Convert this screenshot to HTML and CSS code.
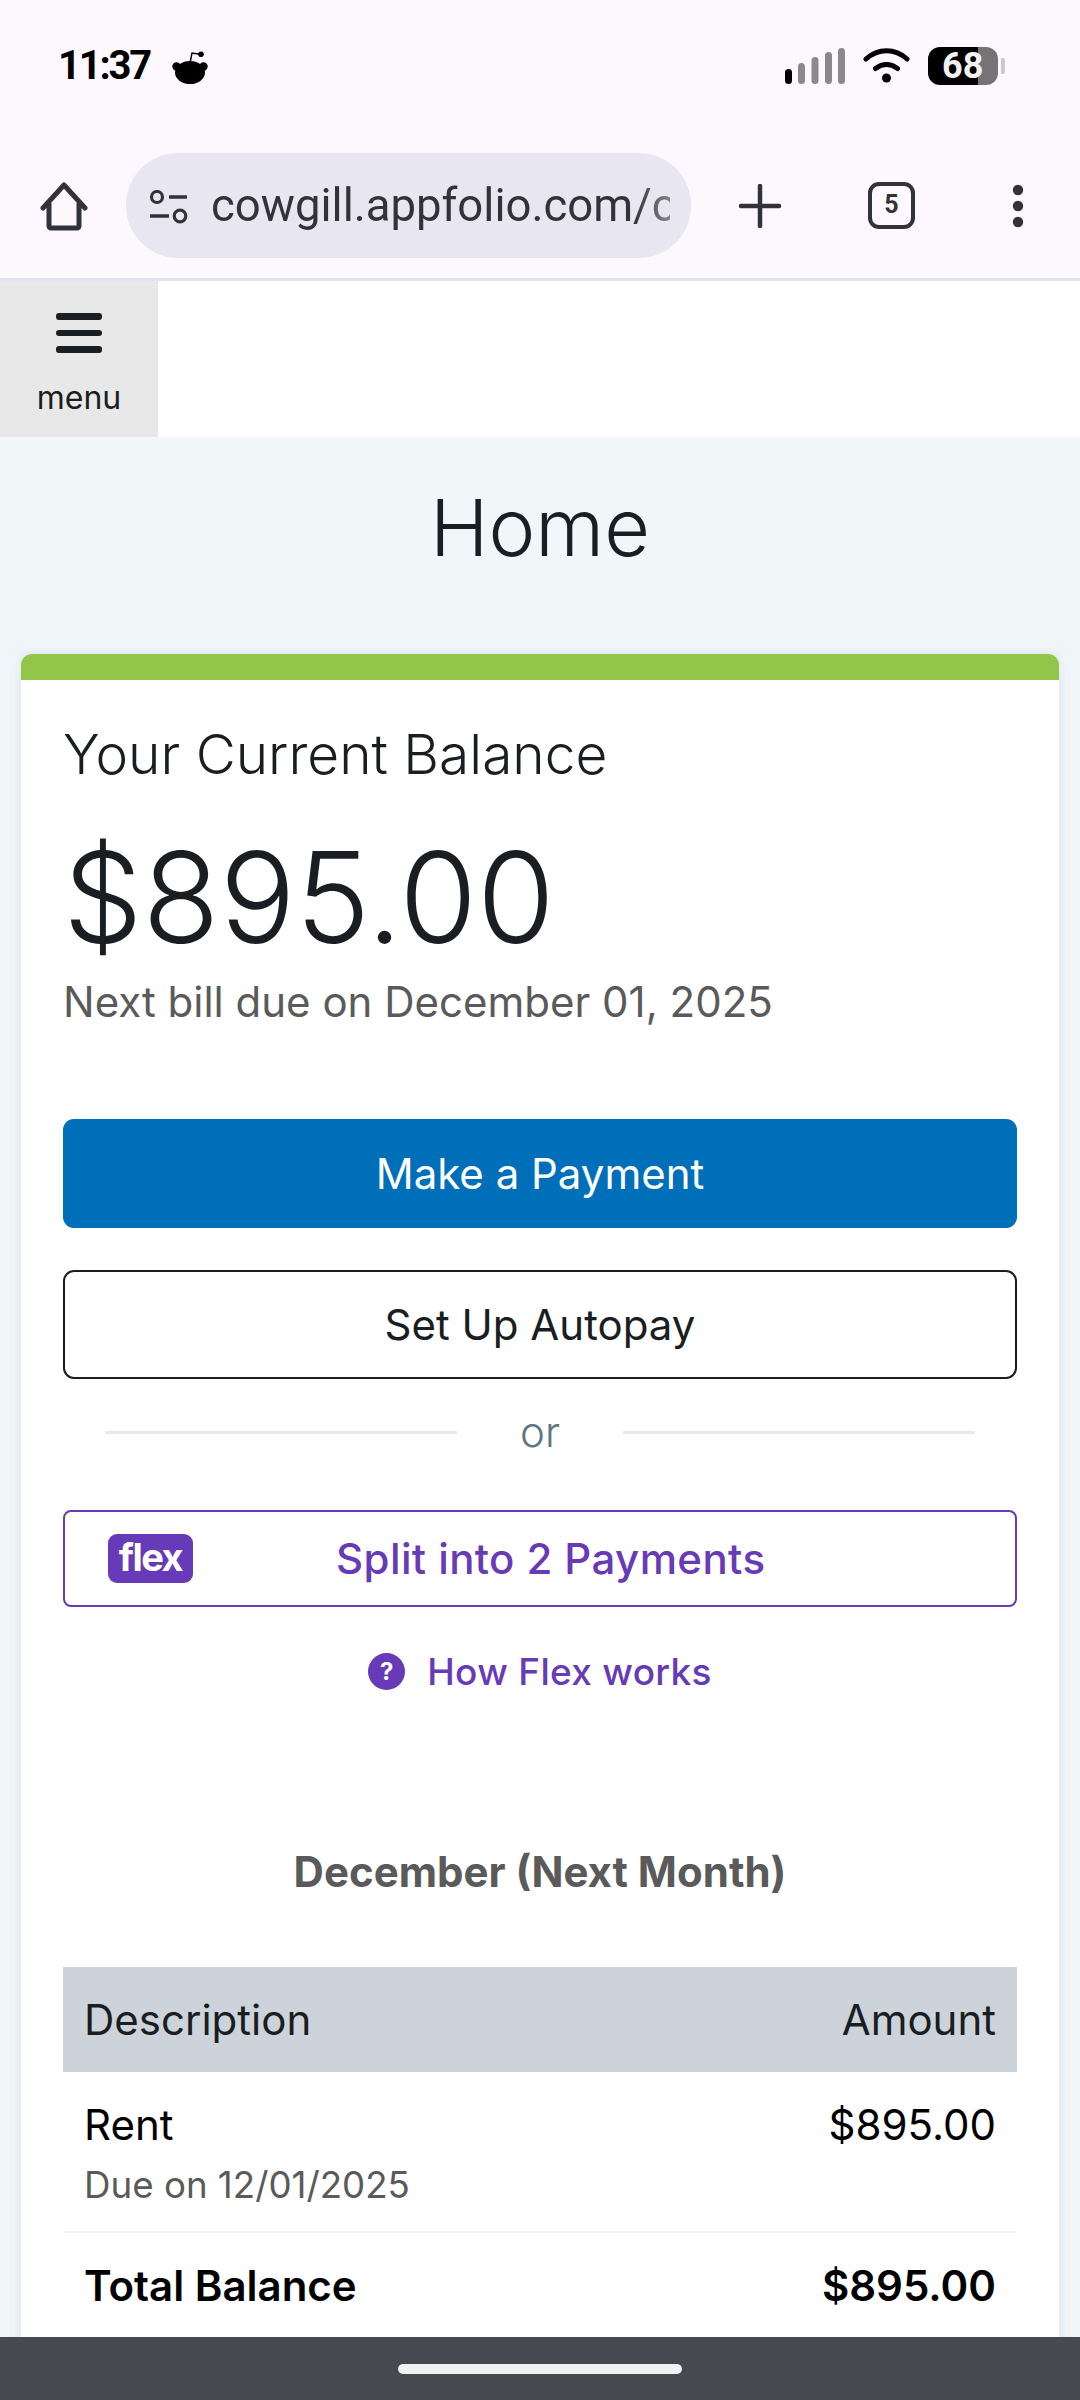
FILE: index.html
```html
<!DOCTYPE html>
<html lang="en">
<head>
<meta charset="utf-8">
<title>Home</title>
<link rel="stylesheet" href="styles.css">
</head>
<body>
<div class="screen">
  <header class="chrome">
    <div class="status">
      <div class="status-left">
        <span class="time">11:37</span>
        <svg class="reddit" viewBox="0 0 36 33" width="36" height="33"><ellipse cx="18" cy="21.500" rx="15" ry="11.500" fill="#000"/><circle cx="4.500" cy="15.500" r="4.200" fill="#000"/><circle cx="31.500" cy="15.500" r="4.200" fill="#000"/><path d="M18 12l2-10 8 1.200" fill="none" stroke="#000" stroke-width="1.500"/><circle cx="29" cy="3.200" r="2.800" fill="#000"/></svg>
      </div>
      <div class="status-right">
        <svg class="signal" viewBox="0 0 60 36" width="60" height="36"><rect x="0" y="21" width="7" height="15" rx="3.500" fill="#000"/><rect x="13" y="15" width="7" height="21" rx="3.500" fill="#8b898c"/><rect x="26.500" y="9" width="7" height="27" rx="3.500" fill="#8b898c"/><rect x="40" y="4" width="7" height="32" rx="3.500" fill="#8b898c"/><rect x="53" y="0" width="7" height="36" rx="3.500" fill="#8b898c"/></svg>
        <svg class="wifi" viewBox="0 0 47 36" width="47" height="36"><path d="M3 12C15 1 32 1 44 12M12.500 21.500c7-5 15-5 22 0" fill="none" stroke="#000" stroke-width="5" stroke-linecap="round"/><circle cx="23.500" cy="31" r="4.500" fill="#000"/></svg>
        <div class="battery"><div class="battery-body"><span class="battery-num">68</span></div><div class="battery-tip"></div></div>
      </div>
    </div>
    <div class="toolbar">
      <svg class="home-icon" viewBox="0 0 48 50" width="48" height="50"><path d="M3 26 24 3l21 23M9 22v22a2 2 0 0 0 2 2h26a2 2 0 0 0 2-2V22" fill="none" stroke="#32323a" stroke-width="5" stroke-linecap="round" stroke-linejoin="round"/></svg>
      <div class="urlbar">
        <svg class="tune" viewBox="0 0 39 34" width="39" height="34"><circle cx="8" cy="7" r="5.500" fill="none" stroke="#32323a" stroke-width="3.200"/><path d="M20 7h18M1 26h19" stroke="#32323a" stroke-width="3.400"/><circle cx="31" cy="26" r="5.800" fill="none" stroke="#32323a" stroke-width="3.200"/></svg>
        <span class="url">cowgill.appfolio.com/c</span>
      </div>
      <svg class="plus" viewBox="0 0 42 44" width="42" height="44"><path d="M21 2v40M2 22h38" stroke="#32323a" stroke-width="4.500" stroke-linecap="round"/></svg>
      <div class="tabs">5</div>
      <svg class="dots" viewBox="0 0 12 44" width="12" height="44"><circle cx="6" cy="6" r="5.200" fill="#32323a"/><circle cx="6" cy="22" r="5.200" fill="#32323a"/><circle cx="6" cy="38" r="5.200" fill="#32323a"/></svg>
    </div>
  </header>

  <nav class="nav">
    <div class="menu">
      <div class="burger"><i></i><i></i><i></i></div>
      <span class="menu-label">menu</span>
    </div>
  </nav>

  <main class="page">
    <h1 class="title">Home</h1>
    <section class="card">
      <div class="card-bar"></div>
      <div class="card-body">
        <h2 class="balance-label">Your Current Balance</h2>
        <div class="balance">$895.00</div>
        <p class="due">Next bill due on December 01, 2025</p>
        <a class="btn btn-primary">Make a Payment</a>
        <a class="btn btn-outline">Set Up Autopay</a>
        <div class="or"><span class="or-line"></span><span class="or-text">or</span><span class="or-line"></span></div>
        <a class="flex-btn"><span class="flex-badge">flex</span><span class="flex-text">Split into 2 Payments</span></a>
        <a class="how">
          <span class="how-icon">?</span>
          <span>How Flex works</span>
        </a>
        <h3 class="month">December (Next Month)</h3>
        <div class="table">
          <div class="thead"><span>Description</span><span>Amount</span></div>
          <div class="row">
            <div><div class="row-name">Rent</div><div class="row-sub">Due on 12/01/2025</div></div>
            <div class="row-name">$895.00</div>
          </div>
          <div class="total"><span>Total Balance</span><span>$895.00</span></div>
        </div>
      </div>
    </section>
  </main>
  <div class="gesture"><div class="pill"></div></div>
</div>
</body>
</html>
```
FILE: styles.css
```css
* { box-sizing: border-box; }
html, body { margin: 0; padding: 0; }
body { font-family: Inter, "Liberation Sans", sans-serif; color: #1a1d21; }
.screen { position: relative; width: 1080px; height: 2400px; overflow: hidden; background: #f1f6f9; }

.chrome { height: 281px; background: #fdf8fe; border-bottom: 3px solid #e3e2ec; }
.status { height: 153px; padding: 47px 75px 0 58px; display: flex; justify-content: space-between; align-items: flex-start; }
.status-left { display: flex; align-items: center; gap: 22px; }
.time { font-family: Roboto, sans-serif; font-weight: 700; font-size: 40px; line-height: 38px; letter-spacing: -2.200px; color: #000; }
.reddit { margin-top: 2px; }
.status-right { display: flex; align-items: flex-start; }
.signal { margin-right: 18px; margin-top: 1px; }
.wifi { margin-right: 18px; }
.battery { display: flex; align-items: center; }
.battery-body { width: 70px; height: 38px; border-radius: 12px; background: linear-gradient(90deg, #000 0, #000 50px, #757375 50px); display: flex; align-items: center; padding-left: 14px; }
.battery-num { font-family: Roboto, sans-serif; font-weight: 700; font-size: 36px; line-height: 38px; color: #f2f2f2; }
.battery-tip { width: 4px; height: 16px; background: #ccc9cd; margin-left: 3px; border-radius: 0 2px 2px 0; }

.toolbar { height: 125px; display: flex; align-items: flex-start; padding-left: 40px; }
.home-icon { margin-top: 29px; flex: none; }
.urlbar { margin-left: 38px; width: 565px; height: 105px; border-radius: 52px; background: #e8e7f1; display: flex; align-items: center; padding-left: 23px; flex: none; }
.tune { flex: none; margin-top: 2px; }
.url { margin-left: 23px; width: 459px; overflow: hidden; white-space: nowrap; font-family: Roboto, sans-serif; font-size: 45.500px; color: #32323a; line-height: 60px; -webkit-mask-image: linear-gradient(90deg, #000 92%, rgba(0,0,0,.55) 100%); mask-image: linear-gradient(90deg, #000 92%, rgba(0,0,0,.55) 100%); }
.plus { margin-left: 48px; margin-top: 31px; flex: none; }
.tabs { margin-left: 87px; margin-top: 29px; width: 47px; height: 47px; border: 4.500px solid #32323a; border-radius: 11px; font-family: Roboto, sans-serif; font-weight: 700; font-size: 25px; line-height: 38px; text-align: center; color: #32323a; flex: none; }
.dots { margin-left: 97px; margin-top: 31px; flex: none; }

.nav { height: 156px; background: #fff; }
.menu { width: 158px; height: 156px; background: #e8e8e8; display: flex; flex-direction: column; align-items: center; }
.burger { width: 46px; margin-top: 32px; display: flex; flex-direction: column; gap: 10px; }
.burger i { display: block; height: 6.500px; border-radius: 3px; background: #1a1d21; }
.menu-label { font-size: 32px; line-height: 40px; margin-top: 25px; color: #1a1d21; }

.page { padding: 0 21px; }
.title { margin: 0; padding-top: 44px; height: 217px; text-align: center; font-weight: 300; font-size: 79px; line-height: 93px; color: #1a1d21; }
.card { background: #fff; border-radius: 11px 11px 0 0; box-shadow: 0 0 11px rgba(170,190,205,.35); height: 1800px; overflow: hidden; }
.card-bar { height: 26px; background: #92c548; }
.card-body { padding: 41px 42px 0; }
.balance-label { margin: 0; font-weight: 300; font-size: 55px; line-height: 66px; }
.balance { font-weight: 300; font-size: 126px; line-height: 160px; margin-top: 30px; }
.due { margin: -5px 0 0; font-size: 42px; line-height: 60px; color: #5a5a5a; }
.btn { display: block; height: 109px; border-radius: 11px; text-align: center; font-size: 42px; line-height: 105px; border: 2px solid transparent; }
.btn-primary { margin-top: 87px; background: #006fba; color: #fff; }
.btn-outline { margin-top: 42px; background: #fff; border-color: #1a1d21; color: #1a1d21; }
.or { display: flex; align-items: center; margin: 26px 0 0; padding: 0 42px; height: 54px; }
.or-line { flex: 1; height: 3px; background: #e8e9ec; }
.or-text { width: 166px; text-align: center; font-size: 42px; font-weight: 300; color: #5e7684; line-height: 54px; }
.flex-btn { display: flex; align-items: center; margin-top: 51px; height: 97px; border: 2px solid #673ab7; border-radius: 8px; padding-left: 43px; }
.flex-badge { width: 85px; height: 49px; border-radius: 9px; background: #673ab7; color: #fff; font-weight: 700; font-size: 38px; line-height: 47px; text-align: center; letter-spacing: -1.500px; }
.flex-text { font-size: 42px; letter-spacing: .4px; font-weight: 500; color: #673ab7; margin-left: 143px; line-height: 60px; }
.how { display: flex; align-items: center; justify-content: center; gap: 22px; margin-top: 39px; height: 50px; font-size: 37px; letter-spacing: .3px; font-weight: 500; color: #673ab7; }
.how-icon { width: 37px; height: 37px; border-radius: 50%; background: #673ab7; color: #fff; font-weight: 700; font-size: 24px; line-height: 37px; text-align: center; letter-spacing: 0; }
.month { margin: 146px 0 0; text-align: center; font-size: 42px; font-weight: 700; line-height: 60px; color: #5a5a5a; }
.table { margin-top: 65px; }
.thead { height: 105px; background: #ccd3da; display: flex; justify-content: space-between; align-items: center; padding: 0 21px; font-size: 42px; color: #1a1d21; }
.row { display: flex; justify-content: space-between; padding: 26px 21px 0; height: 161px; border-bottom: 2px solid #f3f3f3; }
.row-name { font-size: 42px; line-height: 54px; color: #000; }
.row-sub { font-size: 36.700px; line-height: 54px; color: #5a5a5a; margin-top: 6px; }
.total { display: flex; justify-content: space-between; padding: 26px 21px 0; font-size: 42px; font-weight: 600; line-height: 54px; color: #000; }

.gesture { position: absolute; left: 0; right: 0; bottom: 0; height: 63px; background: #464950; display: flex; justify-content: center; padding-top: 27px; }
.pill { width: 284px; height: 10px; border-radius: 5px; background: #f1f1f1; }
```
